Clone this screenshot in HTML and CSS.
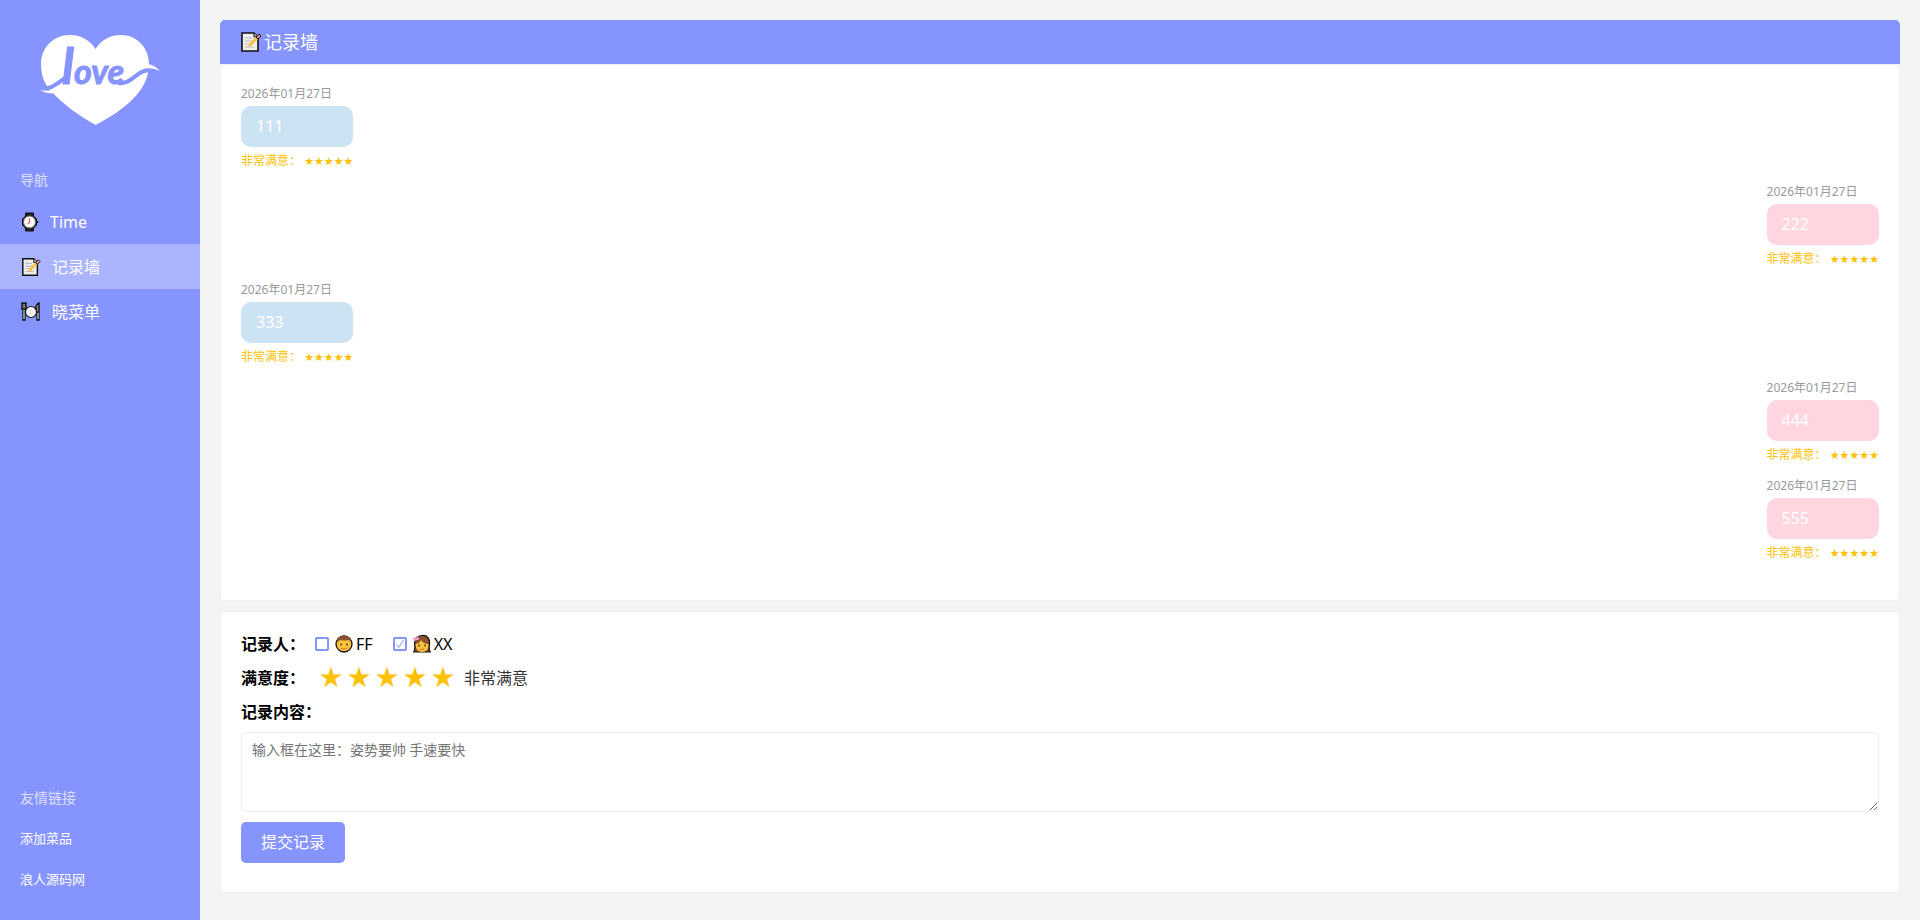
FILE: index.html
```html
<!DOCTYPE html>
<html lang="zh-CN">
<head>
<meta charset="utf-8">
<title>记录墙</title>
<link rel="stylesheet" href="styles.css">
</head>
<body>
<svg class="defs" aria-hidden="true">
  <symbol id="memo" viewBox="0 0 22 22">
    <path d="M2 2h12l4 4v14H2z" fill="#eee" stroke="#111" stroke-width="1.6"/>
    <path d="M14 2v4h4" fill="#bbb" stroke="#111"/>
    <path d="M5 7h7M5 10h8M5 13h6M5 16h9" stroke="#bbb" stroke-width="1.2"/>
    <path d="M8 16l1-3 8-8 2 2-8 8z" fill="#fcc43c"/>
    <path d="M16 6l3-3 2 2-3 3z" fill="#e98a7d" stroke="#111"/>
  </symbol>
</svg>
<div class="app">
  <aside class="sidebar">
    <a class="logo" href="#" aria-label="love">
      <svg viewBox="40 30 120 100" width="120" height="100">
        <path fill="#fff" d="M95.5 49C89 39 80 35 70 35 53 35 41 48 41 64c0 11 3 20 11 28 12 13 26 23 43.500 33C126 109 149 90 149 64c0-16-12-29-28-29-10 0-19 4-25.500 14z"/>
        <path class="logo-line" d="M38 88C50 91 58 83 65 78M118 83C132 85 136 70 150 70"/>
        <path fill="#fff" d="M40.500 90q10 2 17-2l-3 5q-8 1-14-3zM147 64q8 1 13 7-6-3-14-3z"/>
        <text class="logo-word" x="62" y="84"><tspan class="logo-tall">l</tspan>ove</text>
      </svg>
    </a>
    <nav class="menu" aria-label="导航">
      <h2 class="side-title">导航</h2>
      <a class="menu-item" href="#">
        <svg width="20" height="20" viewBox="0 0 20 20" aria-hidden="true">
          <path d="M5.500 1h8v3l3 3v6l-3 3v3h-8v-3l-3-3V7l3-3z" fill="#222" stroke="#111"/>
          <circle cx="9.500" cy="10" r="6" fill="#fff" stroke="#666"/>
          <path d="M9.500 6v4.500L7.500 12" fill="none" stroke="#d66" stroke-width="1.200"/>
          <path d="M17.500 9v2" stroke="#111" stroke-width="1.200"/>
        </svg>Time</a>
      <a class="menu-item active" href="#"><svg width="22" height="20" aria-hidden="true"><use href="#memo"/></svg>记录墙</a>
      <a class="menu-item" href="#">
        <svg width="22" height="20" viewBox="0 0 22 20" aria-hidden="true">
          <path d="M2 1h4v6H5v11H3V7H2z" fill="#777" stroke="#111" stroke-width="1.400"/>
          <path d="M17 18V10h-1V4q1-2 3-3v17z" fill="#888" stroke="#111" stroke-width="1.400"/>
          <path d="M4 8v9M18 11v6" stroke="#9cd3e6" stroke-width="1.200"/>
          <circle cx="11" cy="10" r="5.500" fill="#fff" stroke="#111" stroke-width="1.200"/>
          <circle cx="11" cy="10" r="3.500" fill="#f0f0f0"/>
        </svg>晓菜单</a>
    </nav>
    <nav class="links" aria-label="友情链接">
      <h2 class="side-title">友情链接</h2>
      <a class="link-item" href="#">添加菜品</a>
      <a class="link-item" href="#">浪人源码网</a>
    </nav>
  </aside>

  <main class="main">
    <h1 class="wall-title"><svg width="22" height="22" viewBox="0 0 22 22" aria-hidden="true"><use href="#memo"/></svg>记录墙</h1>
    <section class="card wall">
      <article class="record"><time class="date">2026年01月27日</time><p class="bubble">111</p><p class="rating">非常满意： <span class="small-stars">★★★★★</span></p></article>
      <article class="record mine"><time class="date">2026年01月27日</time><p class="bubble">222</p><p class="rating">非常满意： <span class="small-stars">★★★★★</span></p></article>
      <article class="record"><time class="date">2026年01月27日</time><p class="bubble">333</p><p class="rating">非常满意： <span class="small-stars">★★★★★</span></p></article>
      <article class="record mine"><time class="date">2026年01月27日</time><p class="bubble">444</p><p class="rating">非常满意： <span class="small-stars">★★★★★</span></p></article>
      <article class="record mine"><time class="date">2026年01月27日</time><p class="bubble">555</p><p class="rating">非常满意： <span class="small-stars">★★★★★</span></p></article>
    </section>

    <form class="card form">
      <div class="row">
        <span class="label">记录人：</span>
        <label class="person"><input class="check" type="checkbox">
          <svg width="18" height="20" viewBox="0 0 18 20" aria-hidden="true">
            <circle cx="9" cy="10" r="8" fill="#fcc43c" stroke="#111" stroke-width="1.300"/>
            <path d="M1.500 9Q1 2 9 1.500 17 2 16.500 9L14 6Q8 7 5 6z" fill="#8c5330"/>
            <path d="M6 9.500v2M12 9.500v2" stroke="#222" stroke-width="1.200"/>
            <path d="M6 14q3 2 6 0" fill="none" stroke="#d9704d" stroke-width="1.200"/>
          </svg>FF</label>
        <label class="person"><input class="check" type="checkbox" checked>
          <svg width="18" height="20" viewBox="0 0 18 20" aria-hidden="true">
            <path d="M2 18H.700Q2.500 15 1.500 10 1 2 9 1.500T16.500 10q-1 5 .800 8H13z" fill="#8c5330" stroke="#111" stroke-width="1.200"/>
            <path d="M2.500 10Q7 9 8 6q2 4 7.500 4 0 8-6.500 8-6 0-6.500-8z" fill="#fcc43c"/>
            <path d="M6 10.500v2M12 10.500v2" stroke="#222" stroke-width="1.200"/>
            <path d="M7 15q2 1 4 0" fill="none" stroke="#d9704d" stroke-width="1.200"/>
            <path d="M0 3l3 1 2-2 1 4-3 0-2 2z" fill="#f29ad0"/>
          </svg>XX</label>
      </div>
      <div class="row">
        <span class="label">满意度：</span>
        <div class="stars">
          <button class="star" type="button" aria-label="1星">★</button>
          <button class="star" type="button" aria-label="2星">★</button>
          <button class="star" type="button" aria-label="3星">★</button>
          <button class="star" type="button" aria-label="4星">★</button>
          <button class="star" type="button" aria-label="5星">★</button>
        </div>
        <output class="level">非常满意</output>
      </div>
      <label class="row label heading" for="content">记录内容：</label>
      <textarea class="content" id="content" placeholder="输入框在这里：姿势要帅 手速要快"></textarea>
      <button class="submit" type="submit">提交记录</button>
    </form>
  </main>
</div>
</body>
</html>
```

FILE: styles.css
```css
* {
  box-sizing: border-box;
}

body {
  margin: 0;
  background: #f4f4f4;
  color: #000;
  font: 16px/24px "Noto Sans", "Noto Sans CJK SC", sans-serif;
}

h1,
h2,
p {
  margin: 0;
}

.defs {
  display: none;
}

.app {
  display: flex;
  min-height: 100vh;
}

/* Sidebar */
.sidebar {
  display: flex;
  flex-direction: column;
  flex: 0 0 200px;
  background: #8594ff;
  color: #fff;
}

.logo {
  display: flex;
  justify-content: center;
  padding: 30px 0 40px;
}

.logo-line {
  fill: none;
  stroke: #8594ff;
  stroke-width: 4;
}

.logo-word {
  fill: #8594ff;
  stroke: #8594ff;
  stroke-width: 1;
  font: italic bold 34px Lato, sans-serif;
}

.logo-tall {
  font-size: 50px;
}

.side-title {
  padding: 0 20px;
  font-size: 14px;
  font-weight: 400;
  line-height: 20px;
  opacity: 0.7;
}

.menu .side-title {
  margin-bottom: 9px;
}

.menu-item {
  display: flex;
  align-items: center;
  gap: 10px;
  height: 45px;
  padding: 0 20px;
  color: #fff;
  text-decoration: none;
}

.menu-item.active {
  background: #abb4ff;
}

.links {
  margin-top: auto;
  padding-bottom: 20px;
}

.links .side-title {
  margin-bottom: 10px;
}

.link-item {
  display: block;
  padding: 10px 20px;
  color: #fff;
  font-size: 13px;
  line-height: 21px;
  text-decoration: none;
}

/* Record wall */
.main {
  flex: 1;
  min-width: 0;
  padding: 20px;
}

.wall-title {
  display: flex;
  align-items: center;
  gap: 2px;
  padding: 10px 20px;
  border-radius: 5px 5px 0 0;
  background: #8594ff;
  color: #fff;
  font-size: 18px;
  font-weight: 400;
}

.card {
  padding: 20px;
  border: 1px solid #eee;
  border-radius: 5px;
  background: #fff;
}

.wall {
  display: flex;
  flex-direction: column;
  align-items: flex-start;
  gap: 13px;
  padding-bottom: 38px;
}

.record {
  font-size: 12px;
}

.record.mine {
  align-self: flex-end;
}

.date {
  display: block;
  color: #999;
  line-height: 18px;
}

.bubble {
  margin: 3px 0 5px;
  padding: 8px 15px;
  border-radius: 10px;
  background: #cce3f3;
  color: #fff;
  font-size: 16px;
  line-height: 25px;
}

.mine .bubble {
  background: #ffd5df;
}

.rating {
  height: 18px;
  color: #ffc107;
  font-family: "Noto Sans", "Noto Sans CJK TC", sans-serif;
  line-height: 18px;
}

.small-stars,
.star {
  font-family: "DejaVu Sans", sans-serif;
}

.small-stars {
  font-size: 11px;
}

/* Record form */
.form {
  margin-top: 10px;
  padding-bottom: 29px;
}

.row {
  display: flex;
  align-items: center;
  height: 24px;
  margin-bottom: 10px;
}

.label {
  font-weight: 700;
}

.heading {
  margin-bottom: 8px;
}

.person {
  display: flex;
  align-items: center;
  gap: 3px;
  margin: 0 10px;
}

.check {
  appearance: none;
  width: 14px;
  height: 14px;
  margin: 0 3px 0 0;
  border: 2px solid #8594ff;
  border-radius: 2px;
  background: #fff;
}

.check:checked {
  background: #fff url("data:image/svg+xml,%3Csvg xmlns='http://www.w3.org/2000/svg' viewBox='0 0 10 10'%3E%3Cpath d='M1.500 5.500l2 3L8.500 1' fill='none' stroke='%238594ff'/%3E%3C/svg%3E") center / 10px no-repeat;
}

.stars {
  display: flex;
  margin: 0 7px 0 12px;
}

.star {
  width: 28px;
  padding: 0;
  border: 0;
  background: none;
  color: #ffc107;
  font-size: 28px;
  line-height: 24px;
  text-align: center;
}

.level {
  color: #333;
}

.content {
  display: block;
  width: 100%;
  height: 80px;
  margin-bottom: 10px;
  padding: 7px 10px;
  border: 1px solid #eee;
  border-radius: 5px;
  background: #fff;
  font: 14px/18px "Noto Sans CJK SC", monospace;
  resize: both;
}

.content::placeholder {
  color: #757575;
}

.submit {
  display: block;
  padding: 8px 20px;
  border: 0;
  border-radius: 5px;
  background: #8594ff;
  color: #fff;
  font: inherit;
  line-height: 25px;
}
```
